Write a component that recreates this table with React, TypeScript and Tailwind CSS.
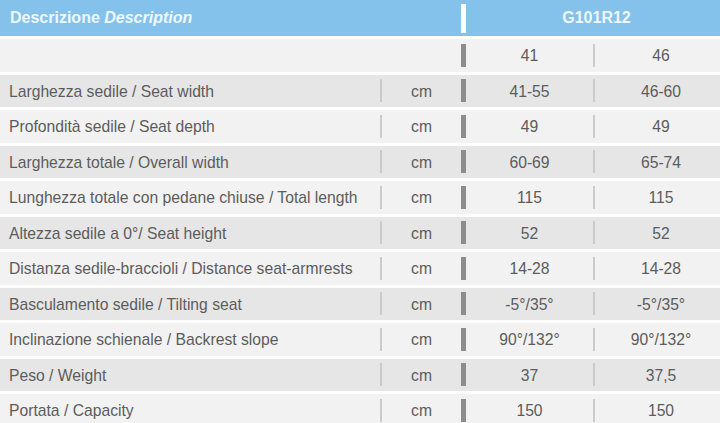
import React from "react";

const rows: [string, string, string, string][] = [
  ["Larghezza sedile / Seat width", "cm", "41-55", "46-60"],
  ["Profondità sedile / Seat depth", "cm", "49", "49"],
  ["Larghezza totale / Overall width", "cm", "60-69", "65-74"],
  ["Lunghezza totale con pedane chiuse / Total length", "cm", "115", "115"],
  ["Altezza sedile a 0°/ Seat height", "cm", "52", "52"],
  ["Distanza sedile-braccioli / Distance seat-armrests", "cm", "14-28", "14-28"],
  ["Basculamento sedile / Tilting seat", "cm", "-5°/35°", "-5°/35°"],
  ["Inclinazione schienale / Backrest slope", "cm", "90°/132°", "90°/132°"],
  ["Peso / Weight", "cm", "37", "37,5"],
  ["Portata / Capacity", "cm", "150", "150"],
];

function Row({
  label,
  unit,
  a,
  b,
  bg,
  showThin,
}: {
  label: string;
  unit: string;
  a: string;
  b: string;
  bg: string;
  showThin: boolean;
}) {
  return (
    <div className={`flex h-[32.5px] shrink-0 items-center ${bg}`}>
      <div className="w-[380px] shrink-0 pl-[9px] pt-[2px] whitespace-nowrap">{label}</div>
      <div className={`h-[23px] w-[2px] shrink-0 ${showThin ? "bg-[#cbcbcb]" : ""}`} />
      <div className="w-[79px] shrink-0 pt-[2px] text-center">{unit}</div>
      <div className="h-[23px] w-[5px] shrink-0 bg-[#8c8c8c]" />
      <div className="w-[127px] shrink-0 pt-[2px] text-center">{a}</div>
      <div className="h-[23px] w-[2px] shrink-0 bg-[#cbcbcb]" />
      <div className="w-[132px] shrink-0 pt-[2px] text-center">{b}</div>
    </div>
  );
}

export default function App() {
  return (
    <div
      className="flex h-[423px] w-[720px] flex-col gap-[3px] overflow-hidden bg-white text-[15.7px] text-[#5c5c5c]"
      style={{ fontFamily: '"Liberation Sans", Arial, sans-serif' }}
    >
      <div className="flex h-[36px] shrink-0 items-center bg-[#84c2ec] font-bold text-[#eef8ff]">
        <div className="w-[461px] shrink-0 pl-[10px] text-[16px] whitespace-nowrap">
          Descrizione <span className="italic">Description</span>
        </div>
        <div className="h-[29px] w-[5px] shrink-0 bg-white" />
        <div className="w-[261px] shrink-0 text-center text-[16px]">G101R12</div>
      </div>
      <Row label="" unit="" a="41" b="46" bg="bg-[#f2f2f2]" showThin={false} />
      {rows.map((r, i) => (
        <Row
          key={i}
          label={r[0]}
          unit={r[1]}
          a={r[2]}
          b={r[3]}
          bg={i % 2 === 0 ? "bg-[#e6e6e6]" : "bg-[#f2f2f2]"}
          showThin
        />
      ))}
    </div>
  );
}
